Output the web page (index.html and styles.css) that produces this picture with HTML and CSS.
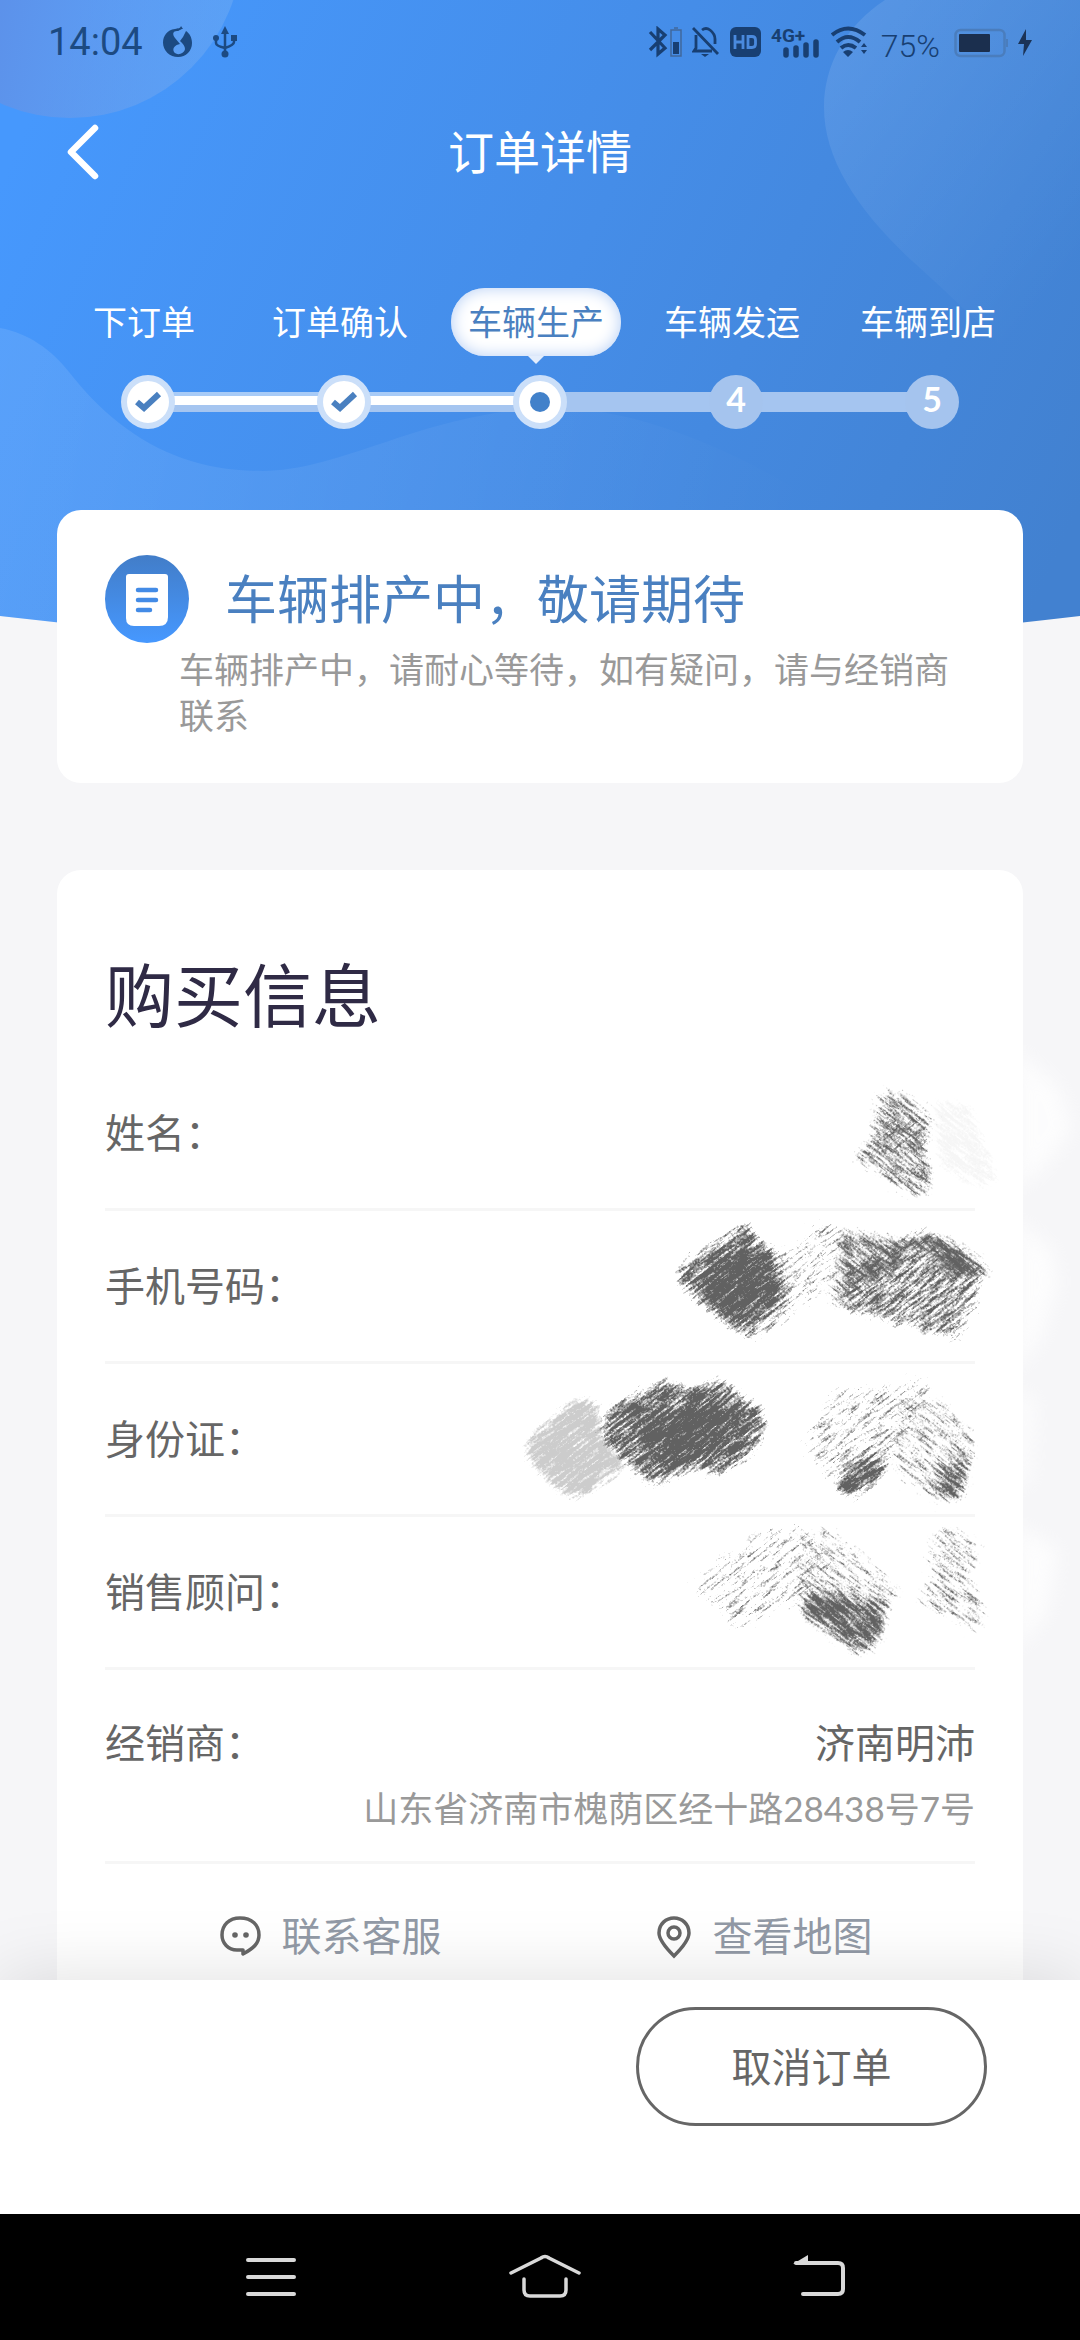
FILE: index.html
```html
<!DOCTYPE html>
<html lang="zh-CN">
<head>
<meta charset="utf-8">
<meta name="viewport" content="width=device-width, initial-scale=1">
<title>订单详情</title>
<link rel="stylesheet" href="styles.css">
</head>
<body>
<div class="app">
  <div class="hero">
    <svg class="hero-bg" viewBox="0 0 1080 660" preserveAspectRatio="none" aria-hidden="true">
      <defs>
        <linearGradient id="sky" gradientUnits="userSpaceOnUse" x1="0" y1="180" x2="1020" y2="640">
          <stop offset="0" stop-color="#4698fd"/><stop offset=".5" stop-color="#458de8"/><stop offset="1" stop-color="#4281d0"/>
        </linearGradient>
        <linearGradient id="orb" gradientUnits="userSpaceOnUse" x1="0" y1="20" x2="230" y2="60">
          <stop offset="0" stop-color="#8088cc" stop-opacity=".38"/><stop offset="1" stop-color="#9cc4f0" stop-opacity=".24"/>
        </linearGradient>
        <linearGradient id="petal" gradientUnits="userSpaceOnUse" x1="830" y1="60" x2="1080" y2="260">
          <stop offset="0" stop-color="#fff" stop-opacity=".1"/><stop offset="1" stop-color="#fff" stop-opacity="0"/>
        </linearGradient>
        <linearGradient id="wave" gradientUnits="userSpaceOnUse" x1="0" y1="400" x2="800" y2="560">
          <stop offset="0" stop-color="#fff" stop-opacity=".1"/><stop offset="1" stop-color="#fff" stop-opacity="0"/>
        </linearGradient>
      </defs>
      <path fill="url(#sky)" d="M0 0H1080V616Q540 680 0 616Z"/>
      <circle cx="70" cy="-54" r="172" fill="url(#orb)"/>
      <path fill="url(#petal)" d="M885 0C845 26 824 66 824 107C824 160 858 210 911 260C965 308 1045 385 1080 440V0Z"/>
      <path fill="url(#wave)" d="M0 328C28 333 52 350 69 372C85 392 98 406 119 423C160 455 205 471 263 471C345 471 430 408 560 408C650 410 760 460 860 530L1000 625Q540 680 0 616Z"/>
    </svg>

    <div class="status">
      <div class="status-side">
        <span class="clock">14:04</span>
        <svg width="30" height="32" viewBox="0 0 30 32" aria-hidden="true"><path fill="#1c4a82" d="M12 3C4 4 0 10 0 16.500C0 25 7 31 15 31C23 31 29 25 29 17C29 11 26 7 23 5L20 11L17 15C20 18 22 20 22 23C21 28 14 30 11 26C9 22 12 19 17 18L12 12C9 8 10 5 14 5C17 5 17 3 20 3L18 0C17 3 15 2 12 3Z"/></svg>
        <svg width="24" height="32" viewBox="0 0 24 32" aria-hidden="true"><g fill="none" stroke="#1c4a82" stroke-width="2.500"><path d="M12 5V28M3 12V17Q3 20 12 22M21 12V16Q21 19 12 22"/></g><g fill="#1c4a82"><path d="M12 0L16 8H8Z"/><circle cx="12" cy="28" r="3.500"/><circle cx="3" cy="12" r="3"/><path d="M18 9H24V15H18Z"/></g></svg>
      </div>
      <div class="status-side status-right">
        <svg width="34" height="32" viewBox="0 0 34 32" aria-hidden="true"><path d="M2 6L17 22L10 28V3L17 9L2 24" fill="none" stroke="#183f72" stroke-width="3.200"/><path d="M23 4H33V30H23ZM26 2H30" fill="none" stroke="#40689c" stroke-width="1.500"/><path d="M25 16H31V28H25Z" fill="#183f72"/></svg>
        <svg width="28" height="32" viewBox="0 0 28 32" aria-hidden="true"><g fill="none" stroke="#183f72" stroke-width="2.800"><path d="M1 2L26 28M4 9V22L2 25H20M10 4Q14 1 18 4Q23 8 23 13V18"/></g><path fill="#183f72" d="M9 28H17L13 31Z"/></svg>
        <svg width="31" height="32" viewBox="0 0 31 32" aria-hidden="true"><rect y="1" width="31" height="30" rx="6" fill="#183f72"/><path d="M5 9V23M13 9V23M5 16H13M18 10.500V21.500H22Q25.500 21.500 25.500 18V14Q25.500 10.500 22 10.500Z" fill="none" stroke="#4a8ade" stroke-width="2.800"/></svg>
        <svg width="50" height="44" viewBox="0 -6 50 44" aria-hidden="true"><text x="0" y="16" class="net">4G+</text><path d="M15 24V29M25 22V29M35 19V29M45 16V29" stroke="#183f72" stroke-width="5.500" stroke-linecap="round"/></svg>
        <svg width="36" height="32" viewBox="0 0 36 32" aria-hidden="true"><g fill="none" stroke="#183f72" stroke-width="4"><path d="M1 9Q17 -4 34 9M6 16Q17 6 29 16M10 22Q17 16 25 22"/></g><path fill="#183f72" d="M12 26Q17 22 22 26L17 31ZM30 21L33 17L36 21ZM30 24H36L33 28Z"/></svg>
        <span class="percent">75%</span>
        <svg width="54" height="32" viewBox="0 0 54 32" aria-hidden="true"><rect x="1.500" y="4" width="49" height="26" rx="5" fill="none" stroke="#4a7dbd" stroke-width="2.500"/><rect x="5" y="8" width="31" height="18" rx="1" fill="#1b2f4e"/><path d="M53 13V21" stroke="#4a7dbd" stroke-width="2"/></svg>
        <svg width="14" height="32" viewBox="0 0 14 32" aria-hidden="true"><path fill="#1b3357" d="M8 3L0 18H6L5 30L14 14H8Z"/></svg>
      </div>
    </div>

    <header class="bar">
      <button class="back" type="button" aria-label="返回"><svg width="36" height="60" viewBox="0 0 36 60" aria-hidden="true"><path d="M31 6L7 30L31 54" fill="none" stroke="#fff" stroke-width="6.500" stroke-linecap="round" stroke-linejoin="round"/></svg></button>
      <h1>订单详情</h1>
    </header>

    <ol class="steps">
      <li class="step done"><span class="label">下订单</span><span class="track"><i class="line none"></i><b class="dot"><svg width="28" height="24" viewBox="0 0 28 24" aria-hidden="true"><path d="M3 12L10 18L25 4" fill="none" stroke="#4a80c0" stroke-width="6"/></svg></b><i class="line full"></i></span></li>
      <li class="step done"><span class="label">订单确认</span><span class="track"><i class="line full"></i><b class="dot"><svg width="28" height="24" viewBox="0 0 28 24" aria-hidden="true"><path d="M3 12L10 18L25 4" fill="none" stroke="#4a80c0" stroke-width="6"/></svg></b><i class="line full"></i></span></li>
      <li class="step done now"><span class="label">车辆生产</span><span class="track"><i class="line full"></i><b class="dot"><i class="core"></i></b><i class="line"></i></span></li>
      <li class="step"><span class="label">车辆发运</span><span class="track"><i class="line"></i><b class="dot">4</b><i class="line"></i></span></li>
      <li class="step"><span class="label">车辆到店</span><span class="track"><i class="line"></i><b class="dot">5</b><i class="line none"></i></span></li>
    </ol>

    <section class="card notice">
      <div class="notice-head">
        <svg width="84" height="88" viewBox="0 0 84 88" aria-hidden="true"><defs><linearGradient id="badge" x1="0" y1="0" x2="0" y2="1"><stop offset="0" stop-color="#427dc8"/><stop offset="1" stop-color="#4698ff"/></linearGradient></defs><ellipse cx="42" cy="44" rx="42" ry="44" fill="url(#badge)"/><path d="M24 19H60Q63 19 63 22V62Q63 71 54 71H29Q21 71 21 63V22Q21 19 24 19Z" fill="#fff"/><path d="M33 35H51M33 45H51M33 55H45" stroke="#438be6" stroke-width="4.500" stroke-linecap="round"/></svg>
        <h2>车辆排产中，敬请期待</h2>
      </div>
      <p>车辆排产中，请耐心等待，如有疑问，请与经销商联系</p>
    </section>
  </div>

  <main class="card info">
    <h2>购买信息</h2>
    <dl>
      <div class="row"><dt>姓名：</dt><dd></dd></div>
      <div class="row"><dt>手机号码：</dt><dd></dd></div>
      <div class="row"><dt>身份证：</dt><dd></dd></div>
      <div class="row"><dt>销售顾问：</dt><dd></dd></div>
      <div class="row dealer"><dt>经销商：</dt><dd>济南明沛<small>山东省济南市槐荫区经十路28438号7号</small></dd></div>
    </dl>
    <div class="links">
      <a href="#service"><svg width="42" height="42" viewBox="0 0 42 42" aria-hidden="true"><path d="M20 3C32 3 39 10 39 20C39 28 34 33 23 39V35H17C8 35 2 28 2 20C2 10 9 3 20 3Z" fill="none" stroke="#666" stroke-width="3.500" stroke-linejoin="round"/><circle cx="15" cy="20" r="2.800" fill="#666"/><circle cx="26" cy="20" r="2.800" fill="#666"/></svg>联系客服</a>
      <a href="#map"><svg width="38" height="46" viewBox="0 0 38 46" aria-hidden="true"><g fill="none" stroke="#666" stroke-width="3.500"><path d="M19 43Q4 28 4 20C4 11 11 5 19 5S34 11 34 20Q34 28 19 43Z"/><circle cx="19" cy="20" r="6"/></g></svg>查看地图</a>
    </div>

    <svg class="pencil" width="560" height="640" viewBox="520 1040 560 640" aria-hidden="true">
      <defs>
        <filter id="hatch" x="-10%" y="-10%" width="120%" height="120%" color-interpolation-filters="sRGB">
          <feTurbulence type="fractalNoise" baseFrequency=".05 .36" numOctaves="5" seed="7" result="n"/>
          <feColorMatrix in="n" values="0 0 0 0 0  0 0 0 0 0  0 0 0 0 0  1.6 0 0 0 -.3" result="streak"/>
          <feTurbulence type="fractalNoise" baseFrequency=".55" numOctaves="2" seed="3" result="m"/>
          <feColorMatrix in="m" values="0 0 0 0 0  0 0 0 0 0  0 0 0 0 0  1.8 0 0 0 -.4" result="speck"/>
          <feComposite in="streak" in2="speck" operator="arithmetic" k2=".62" k3=".38" result="grain"/>
          <feGaussianBlur in="SourceAlpha" stdDeviation="7" result="soft"/>
          <feComposite in="grain" in2="soft" operator="arithmetic" k2=".5" k3=".5"/>
          <feColorMatrix values="0 0 0 0 .38  0 0 0 0 .38  0 0 0 0 .38  0 0 0 6 -3.2"/>
        </filter>
        <filter id="chalk" x="-20%" y="-20%" width="140%" height="140%"><feGaussianBlur stdDeviation="9"/></filter>
      </defs>
      <g fill="#fff" filter="url(#chalk)" opacity=".75">
        <path d="M1018 1050L1060 1090L1072 1130L1045 1165L1018 1190Z"/>
        <path d="M1018 1220L1052 1250L1058 1285L1040 1340L1018 1370Z"/>
        <path d="M1018 1390L1035 1400L1030 1480L1018 1490Z"/>
        <path d="M1018 1525L1058 1550L1048 1610L1018 1650Z"/>
      </g>
      <g transform="rotate(-38)" filter="url(#hatch)">
        <g transform="rotate(38)">
          <path opacity=".84" d="M676 1264L748 1218L770 1248L790 1288L766 1320L735 1336L712 1320L676 1286Z"/>
          <path opacity=".94" d="M700 1275L745 1250L760 1285L740 1310L715 1305Z"/>
          <path opacity=".52" d="M762 1250L825 1216L856 1222L830 1296L748 1352L738 1328Z"/>
          <path opacity=".72" d="M840 1270L870 1250L925 1222L945 1238L990 1266L976 1312L958 1345L900 1328L838 1314Z"/>
          <path opacity=".86" d="M597 1440L604 1406L668 1374L685 1386L724 1374L742 1394L760 1401L772 1425L756 1454L720 1482L703 1470L650 1490L628 1468Z"/>
          <path opacity=".95" d="M650 1425L690 1405L735 1405L725 1440L690 1462L650 1455Z"/>
          <path opacity=".54" d="M796 1450L826 1386L870 1384L920 1372L944 1392L904 1440L884 1476L845 1502Z"/>
          <path opacity=".88" d="M836 1482L858 1460L888 1456L884 1482L846 1504Z"/>
          <path opacity=".52" d="M686 1580L750 1528L800 1522L836 1550L830 1594L735 1636L716 1620Z"/>
          <path opacity=".64" d="M868 1128L915 1102L932 1125L924 1154L868 1160Z"/>
        </g>
      </g>
      <g transform="rotate(38)" filter="url(#hatch)">
        <g transform="rotate(-38)">
          <path opacity=".68" d="M876 1090L900 1087L936 1108L932 1150L938 1190L918 1204L846 1158L866 1138L870 1110Z"/>
          <path opacity=".74" d="M838 1224L880 1232L926 1236L892 1284L850 1294L884 1334L826 1302Z"/>
          <path opacity=".92" d="M912 1234L948 1234L1002 1276L950 1282L930 1258Z"/>
          <path opacity=".56" d="M895 1396L945 1396L980 1430L976 1460L966 1500L935 1504L886 1474Z"/>
          <path opacity=".68" d="M936 1475L972 1446L966 1502L935 1506Z"/>
          <path opacity=".53" d="M796 1526L830 1524L900 1578L906 1602L850 1616L786 1602Z"/>
          <path opacity=".88" d="M816 1588L850 1600L892 1602L884 1642L860 1658L794 1616Z"/>
          <path opacity=".56" d="M924 1536L952 1520L990 1546L974 1580L994 1612L978 1638L912 1606L928 1570Z"/>
        </g>
      </g>
      <g opacity=".32">
        <g transform="rotate(-38)" filter="url(#hatch)"><path transform="rotate(38)" opacity=".95" d="M522 1440L570 1398L598 1394L608 1440L634 1466L575 1504L554 1492L524 1460Z"/></g>
      </g>
      <g opacity=".06">
        <g transform="rotate(38)" filter="url(#hatch)"><path transform="rotate(-38)" opacity=".8" d="M930 1095L970 1100L1000 1170L990 1195L935 1170Z"/></g>
      </g>
    </svg>
  </main>

  <footer class="actions"><button type="button">取消订单</button></footer>
  <nav class="system">
    <button type="button" aria-label="菜单"><svg width="52" height="48" viewBox="0 0 52 48" aria-hidden="true"><path d="M3 7H49M3 24H49M3 41H49" stroke="#d9d9d9" stroke-width="4" stroke-linecap="round"/></svg></button>
    <button type="button" aria-label="主屏幕"><svg width="72" height="48" viewBox="0 0 72 48" aria-hidden="true"><path d="M2 20L32 5Q36 2 40 5L70 20M15 26V37Q15 43 21 43H51Q57 43 57 37V26" fill="none" stroke="#d9d9d9" stroke-width="3.500" stroke-linecap="round"/></svg></button>
    <button type="button" aria-label="后退"><svg width="54" height="48" viewBox="0 0 54 48" aria-hidden="true"><path d="M4 10H46Q51 10 51 15V36Q51 41 46 41H11" fill="none" stroke="#d9d9d9" stroke-width="4" stroke-linecap="round"/><path d="M1 11L16 2V11Z" fill="#d9d9d9"/></svg></button>
  </nav>
</div>
</body>
</html>
```
FILE: styles.css
```css
* { box-sizing: border-box; }
body { margin: 0; background: #f6f6f8; color: #666; font-family: Lato, "Noto Sans CJK SC", sans-serif; font-size: 40px; line-height: 60px; }
h1, h2, p, dl, dd, ol { margin: 0; padding: 0; font-weight: 400; }
ol { list-style: none; }
i, b { font-style: normal; font-weight: 400; }
svg { display: block; flex: none; }
button { font: inherit; color: inherit; background: none; border: 0; padding: 0; }
a { color: inherit; text-decoration: none; }
.app { display: flex; flex-direction: column; min-height: 100vh; }

.hero { position: relative; }
.hero-bg { position: absolute; top: 0; left: 0; width: 100%; height: 660px; z-index: -1; }

.status { display: flex; justify-content: space-between; height: 84px; padding: 0 48px; font-family: Roboto, sans-serif; }
.status-side { display: flex; align-items: center; gap: 20px; }
.status-right { gap: 10px; }
.clock { font-size: 38px; color: #1c4a82; }
.percent { font-size: 32px; font-weight: 300; line-height: 32px; padding: 8px 4px 0; color: #183f72; }
.net { font: 700 19px Roboto, sans-serif; fill: #183f72; }

.bar { display: grid; grid-template-columns: 80px 1fr 80px; align-items: center; height: 136px; padding: 0 64px; color: #fff; }
.bar h1 { font-size: 46px; text-align: center; }
.back { justify-self: start; }

.steps { display: grid; grid-template-columns: repeat(5, 1fr); padding: 68px 50px 0; color: #fff; font-size: 34px; }
.step { display: grid; gap: 19px; justify-items: center; }
.label { display: flex; align-items: center; height: 68px; margin-right: 8px; line-height: 68px; }
.now .label { position: relative; padding: 0 17px; border-radius: 34px; background: #fff; box-shadow: inset 0 0 16px #b5cef5; color: #4a80c0; }
.now .label::after { content: ""; position: absolute; top: 100%; left: 50%; margin-left: -8px; border: 8px solid transparent; border-top-color: #e3edfc; border-bottom: 0; }
.track { display: flex; align-items: center; width: 100%; }
.line { flex: 1; height: 20px; margin: 0 -3px; background: #a5c5f0; }
.line:first-child { margin-left: 0; }
.line:last-child { margin-right: 0; }
.line.full { background: linear-gradient(#a8cbf7 4px, #fff 4px, #fff 13px, #a5c5f0 13px); }
.line.none { visibility: hidden; }
.dot { position: relative; display: flex; align-items: center; justify-content: center; width: 54px; height: 54px; padding-bottom: 6px; border-radius: 50%; background: #a5c4ee; font-weight: 700; line-height: 46px; }
.done .dot { padding: 0; border: 6px solid #cbdff9; background: #fff; }
.core { width: 20px; height: 20px; border-radius: 50%; background: #4281ca; }

.card { margin: 0 57px; padding: 0 48px; border-radius: 24px; background: #fff; }
.notice { margin-top: 81px; padding: 45px 48px; }
.notice-head { display: flex; align-items: center; gap: 36px; }
.notice h2 { font-size: 52px; color: #4a80c0; }
.notice p { padding: 3px 0 0 74px; font-size: 35px; line-height: 46px; color: #999; }

.info { position: relative; flex: 1; margin-top: 87px; padding-top: 84px; border-radius: 24px 24px 0 0; }
.info h2 { margin-bottom: 20px; font-size: 69px; line-height: 84px; color: #2f2a45; }
.row { display: flex; justify-content: space-between; align-items: center; height: 153px; border-bottom: 3px solid #f6f6f6; }
.dealer { align-items: flex-start; height: auto; padding: 43px 0 28px; }
.row dd { text-align: right; }
.row small { display: block; margin-top: 10px; font-size: 35px; line-height: 50px; color: #999; }
.links { display: grid; grid-template-columns: 1fr 1fr; gap: 10px; padding: 42px 0 14px 14px; color: #929aa6; }
.links a { display: flex; align-items: center; justify-content: center; gap: 20px; }
.pencil { position: absolute; top: 170px; right: -57px; }

.actions { position: relative; display: flex; justify-content: flex-end; padding: 27px 93px 88px; background: #fff; box-shadow: 0 0 70px rgba(0, 0, 0, .13); }
.actions button { width: 351px; height: 119px; border: 3px solid #666; border-radius: 60px; }
.system { position: relative; display: flex; justify-content: space-between; align-items: center; height: 126px; padding: 0 225px 0 235px; background: #000; }
.system button { display: flex; justify-content: center; width: 72px; }
```
